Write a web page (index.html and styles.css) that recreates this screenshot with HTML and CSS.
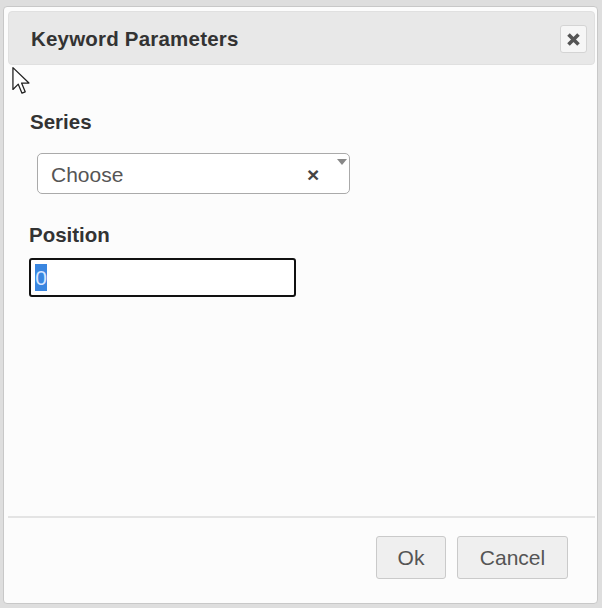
FILE: index.html
```html
<!DOCTYPE html>
<html>
<head>
<meta charset="utf-8">
<link rel="stylesheet" href="styles.css">
</head>
<body>
<div class="page">
  <div class="dialog">
    <div class="header">
      <span class="title">Keyword Parameters</span>
      <button class="close" aria-label="Close">
        <svg width="15" height="15" viewBox="0 0 15 15"><path d="M2.5 2.5 L12.5 12.5 M12.5 2.5 L2.5 12.5" stroke="#555" stroke-width="3.6" stroke-linecap="butt"/></svg>
      </button>
    </div>
    <div class="body">
      <div class="label label-series">Series</div>
      <div class="select">
        <span class="placeholder">Choose</span>
        <span class="clear">×</span>
        <span class="arrow"></span>
      </div>
      <div class="label label-position">Position</div>
      <div class="input"><span class="sel">0</span></div>
    </div>
    <div class="footer">
      <button class="btn btn-ok">Ok</button>
      <button class="btn btn-cancel">Cancel</button>
    </div>
  </div>
  <svg class="cursor" width="22" height="32" viewBox="0 0 20 30">
    <path d="M1.5 1.5 L1.5 22 L6.5 17 L10 25.5 L13 24.2 L9.6 16 L16.5 16 Z" fill="#fff" stroke="#222" stroke-width="1.2" stroke-linejoin="round"/>
  </svg>
</div>
</body>
</html>
```
FILE: styles.css
```css
html, body {
  margin: 0;
  padding: 0;
  background: #dedede;
  font-family: "Liberation Sans", Arial, sans-serif;
}
.page {
  position: relative;
  width: 602px;
  height: 608px;
  padding: 6px 0 0 3px;
  box-sizing: border-box;
}
.dialog {
  width: 595px;
  height: 598px;
  box-sizing: border-box;
  background: #fcfcfc;
  border: 1px solid #c8c8c8;
  border-radius: 4px;
  padding: 4px 2px 0 4px;
  display: flex;
  flex-direction: column;
}
.header {
  height: 54px;
  box-sizing: border-box;
  background: #e8e8e8;
  border: 1px solid #e0e0e0;
  border-radius: 4px;
  display: flex;
  align-items: center;
  justify-content: space-between;
  padding: 0 7px 0 22px;
}
.title {
  font-weight: bold;
  font-size: 20.5px;
  letter-spacing: 0.2px;
  line-height: 24px;
  color: #333;
  margin-top: 1px;
}
.close {
  width: 27px;
  height: 28px;
  padding: 0;
  margin-top: 2px;
  border: 1px solid #d4d4d4;
  border-radius: 3px;
  background: #f6f6f6;
  display: flex;
  align-items: center;
  justify-content: center;
}
.body {
  flex: 1;
  padding: 0 0 0 21px;
  border-bottom: 2px solid #e4e4e4;
}
.label {
  font-weight: bold;
  font-size: 20.5px;
  line-height: 24px;
  color: #333;
}
.label-series {
  margin-top: 45px;
  margin-left: 1px;
}
.select {
  position: relative;
  margin-top: 19px;
  margin-left: 8px;
  width: 313px;
  height: 41px;
  box-sizing: border-box;
  border: 1px solid #aaa;
  border-radius: 5px;
  background: #fff;
  display: flex;
  align-items: center;
  padding: 2px 0 0 13px;
}
.placeholder {
  font-size: 21px;
  color: #555;
}
.clear {
  position: absolute;
  left: 269px;
  top: 9px;
  font-size: 21px;
  font-weight: bold;
  color: #444;
}
.arrow {
  position: absolute;
  right: 2px;
  top: 5px;
  width: 0;
  height: 0;
  border-left: 5px solid transparent;
  border-right: 5px solid transparent;
  border-top: 6px solid #888;
}
.label-position {
  margin-top: 29px;
}
.input {
  margin-top: 11px;
  width: 267px;
  height: 39px;
  box-sizing: border-box;
  border: 2px solid #111;
  border-radius: 3px;
  background: #fff;
  padding: 4px 0 0 4px;
}
.sel {
  display: inline-block;
  background: #3a86e0;
  color: #d8e6ff;
  font-size: 21px;
  line-height: 27px;
  width: 12px;
  text-align: center;
}
.footer {
  height: 85px;
  display: flex;
  justify-content: flex-end;
  align-items: flex-start;
  gap: 11px;
  padding: 18px 27px 0 0;
  box-sizing: border-box;
}
.btn {
  height: 43px;
  border: 1px solid #cacaca;
  border-radius: 3px;
  background: #efefef;
  font-family: "Liberation Sans", Arial, sans-serif;
  font-size: 21px;
  color: #555;
  padding: 0;
}
.btn-ok { width: 70px; }
.btn-cancel { width: 111px; }
.cursor {
  position: absolute;
  left: 11px;
  top: 66px;
}
```
